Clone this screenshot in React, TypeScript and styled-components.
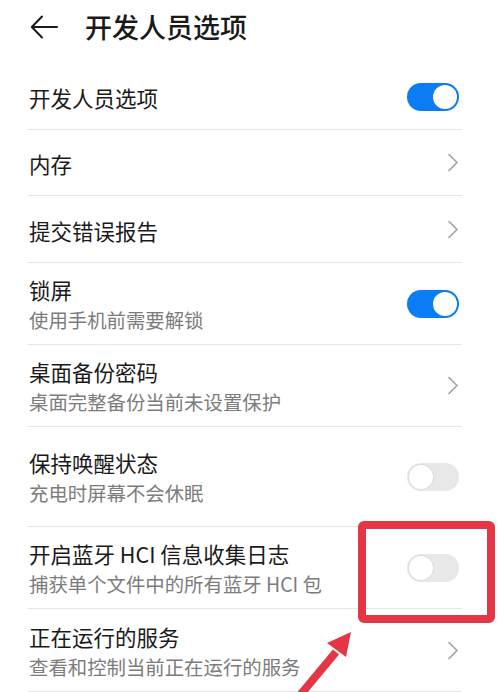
import styled, { createGlobalStyle } from "styled-components";

// ---------- Global Styles ----------
const GlobalStyle = createGlobalStyle`
  * { box-sizing: border-box; }
  html, body { margin: 0; padding: 0; background: #ffffff; }
  body {
    font-family: "Noto Sans CJK SC", "Noto Sans", Roboto, sans-serif;
    color: #1a1a1a;
  }
`;

// ---------- styled-components ----------
const S = {
  Screen: styled.div`
    position: relative;
    width: 500px;
    height: 692px;
    overflow: hidden;
    background: #ffffff;
  `,
  Header: styled.header`
    height: 64px;
    display: flex;
    align-items: center;
    padding: 0 0 10px 30px;
    gap: 27px;
  `,
  BackBtn: styled.button`
    width: 28px;
    height: 24px;
    padding: 0;
    border: none;
    background: transparent;
    display: grid;
    place-items: center;
    color: #1a1a1a;
  `,
  Title: styled.h1`
    margin: 0;
    font-size: 27px;
    font-weight: 500;
    line-height: 36px;
  `,
  List: styled.div`
    display: flex;
    flex-direction: column;
    padding: 0 38px 0 28px;
  `,
  Row: styled.div<{ $h: number }>`
    min-height: ${(p) => p.$h}px;
    display: flex;
    align-items: center;
    justify-content: space-between;
    padding: 0 3px 0 1px;
    border-bottom: 1px solid #e6e6e6;
  `,
  Texts: styled.div`
    display: flex;
    flex-direction: column;
    padding-top: 3px;
  `,
  ItemTitle: styled.div`
    font-size: 21.5px;
    line-height: 30px;
    color: #1a1a1a;
  `,
  ItemSub: styled.div`
    font-size: 19.4px;
    line-height: 30px;
    color: #7c7c7c;
  `,
  Switch: styled.div<{ $on: boolean }>`
    position: relative;
    width: 52px;
    height: 28px;
    border-radius: 14px;
    flex-shrink: 0;
    background: ${(p) => (p.$on ? "#0a7cf4" : "#e8e8e8")};
  `,
  Knob: styled.span<{ $on: boolean }>`
    position: absolute;
    top: 2px;
    left: ${(p) => (p.$on ? "26px" : "2px")};
    width: 24px;
    height: 24px;
    border-radius: 50%;
    background: #ffffff;
    box-shadow: ${(p) => (p.$on ? "none" : "0 0 0 1px #dcdcdc")};
  `,
  Chevron: styled.span`
    width: 12px;
    display: grid;
    place-items: center;
    color: #a0a0a0;
  `,
  Annotation: styled.svg`
    position: absolute;
    left: 0;
    top: 0;
    pointer-events: none;
  `,
};

type Item = {
  title: string;
  sub?: string;
  kind: "on" | "off" | "link";
  h: number;
};

const items: Item[] = [
  { title: "开发人员选项", kind: "on", h: 66 },
  { title: "内存", kind: "link", h: 66 },
  { title: "提交错误报告", kind: "link", h: 67 },
  { title: "锁屏", sub: "使用手机前需要解锁", kind: "on", h: 82 },
  { title: "桌面备份密码", sub: "桌面完整备份当前未设置保护", kind: "link", h: 82 },
  { title: "保持唤醒状态", sub: "充电时屏幕不会休眠", kind: "off", h: 100 },
  { title: "开启蓝牙 HCI 信息收集日志", sub: "捕获单个文件中的所有蓝牙 HCI 包", kind: "off", h: 82 },
  { title: "正在运行的服务", sub: "查看和控制当前正在运行的服务", kind: "link", h: 83 },
];

function BackArrow() {
  return (
    <svg width="28" height="24" viewBox="0 0 28 24" fill="none">
      <path
        d="M12 1.5 L1.8 12 L12 22.5 M1.8 12 H27"
        stroke="currentColor"
        strokeWidth="2"
        strokeLinecap="round"
        strokeLinejoin="round"
      />
    </svg>
  );
}

function ChevronRight() {
  return (
    <svg width="12" height="19" viewBox="0 0 12 19" fill="none">
      <path
        d="M2 1.5 L10 9.5 L2 17.5"
        stroke="currentColor"
        strokeWidth="1.6"
        strokeLinecap="round"
        strokeLinejoin="round"
      />
    </svg>
  );
}

// ---------- component ----------
export default function App() {
  return (
    <>
      <GlobalStyle />
      <S.Screen>
        <S.Header>
          <S.BackBtn aria-label="返回">
            <BackArrow />
          </S.BackBtn>
          <S.Title>开发人员选项</S.Title>
        </S.Header>

        <S.List>
          {items.map((it) => (
            <S.Row key={it.title} $h={it.h}>
              <S.Texts>
                <S.ItemTitle>{it.title}</S.ItemTitle>
                {it.sub && <S.ItemSub>{it.sub}</S.ItemSub>}
              </S.Texts>
              {it.kind === "link" ? (
                <S.Chevron>
                  <ChevronRight />
                </S.Chevron>
              ) : (
                <S.Switch $on={it.kind === "on"}>
                  <S.Knob $on={it.kind === "on"} />
                </S.Switch>
              )}
            </S.Row>
          ))}
        </S.List>

        {/* red annotation: box around the HCI switch and an arrow pointing at it */}
        <S.Annotation width="500" height="692" viewBox="0 0 500 692">
          <rect
            x="362"
            y="525"
            width="129"
            height="94"
            rx="2"
            fill="none"
            stroke="#e43645"
            strokeWidth="8"
          />
          <line
            x1="296"
            y1="700"
            x2="336"
            y2="652"
            stroke="#e43645"
            strokeWidth="8"
          />
          <polygon points="351,632 327,643 346,657" fill="#e43645" />
        </S.Annotation>
      </S.Screen>
    </>
  );
}
